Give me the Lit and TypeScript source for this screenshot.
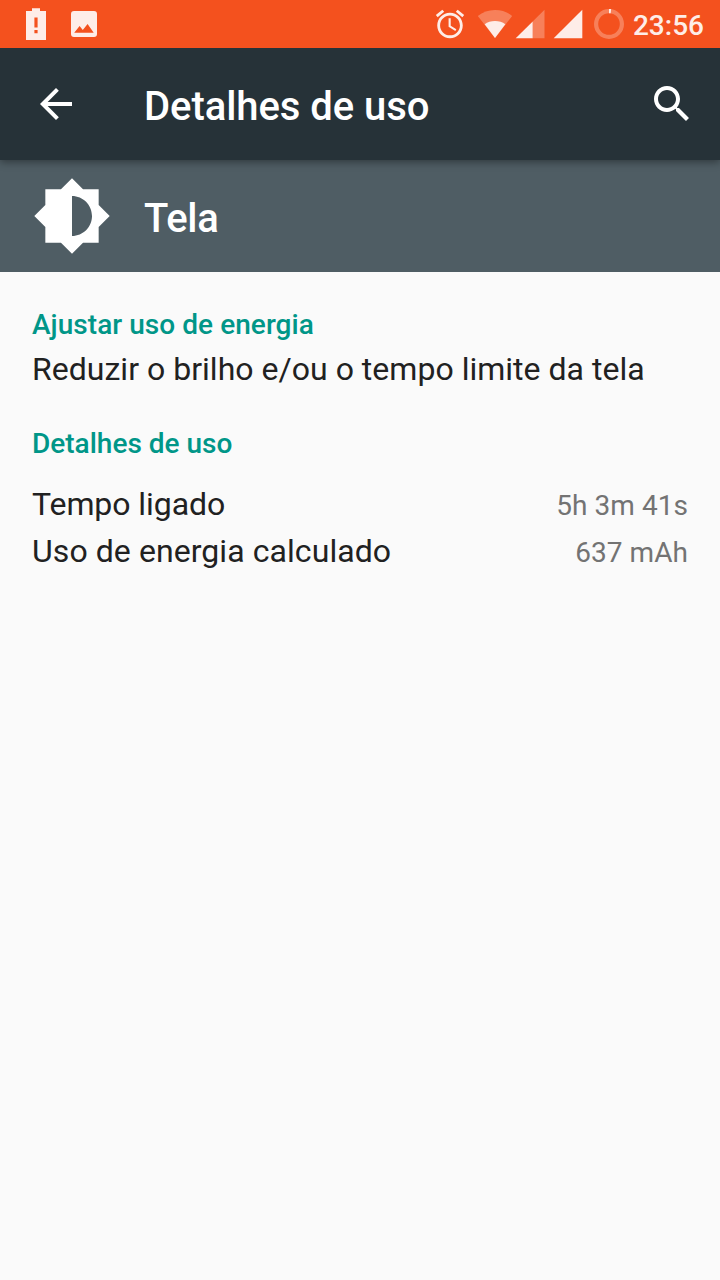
import { LitElement, html, css } from "lit";
import { customElement } from "lit/decorators.js";
import { classMap } from "lit/directives/class-map.js";

const USAGE = [
  { label: "Tempo ligado", value: "5h 3m 41s", tight: true },
  { label: "Uso de energia calculado", value: "637 mAh", tight: false },
];

@customElement("status-bar")
class StatusBar extends LitElement {
  static styles = css`
    :host {
      display: flex;
      position: relative;
      z-index: 1;
      justify-content: space-between;
      height: 48px;
      background: #f4511e;
      color: #feede8;
    }
    svg {
      display: block;
      fill: currentColor;
    }
    .right {
      display: flex;
    }
    .clock {
      font-size: 28px;
      font-weight: 500;
      line-height: 33px;
      padding: 9px 16px 0 0;
      white-space: nowrap;
    }
  `;
  render() {
    return html`
      <svg width="120" height="48" viewBox="0 0 120 48">
        <path
          fill-rule="evenodd"
          d="M26 11h6V8.300h8V11h6v29H26zM34.400 17.500v10h3.200v-10zM34.400 30v3.200h3.200V30z"
        />
        <path
          fill-rule="evenodd"
          d="M74 11h20a3 3 0 0 1 3 3v20a3 3 0 0 1-3 3H74a3 3 0 0 1-3-3V14a3 3 0 0 1 3-3zM74.200 32.700h19.500L87.600 24l-4.800 6-3.200-4z"
        />
      </svg>
      <div class="right">
        <svg width="203" height="48" viewBox="430 0 203 48">
          <g transform="translate(433 7) scale(1.417)">
            <path
              d="M22 5.720l-4.600-3.860-1.290 1.530 4.600 3.860L22 5.720zM7.880 3.390L6.600 1.860 2 5.710l1.290 1.530 4.590-3.850zM12.500 8H11v6l4.750 2.850.75-1.230-4-2.370V8zM12 4c-4.970 0-9 4.030-9 9s4.020 9 9 9c4.970 0 9-4.030 9-9s-4.030-9-9-9zm0 16c-3.870 0-7-3.130-7-7s3.130-7 7-7 7 3.130 7 7-3.130 7-7 7z"
            />
          </g>
          <path opacity=".3" d="M495 38L477.800 16Q485 10 495 10T512.200 16z" />
          <path d="M495 38L484.700 24.300Q489 21 495 21T505.300 24.300z" />
          <path opacity=".3" d="M532.700 21.500L544.500 9.700V38.200H532.700z" />
          <path d="M515.700 38.200L532.700 21.500V38.200z" />
          <path d="M553.700 38.200L582.300 9.700V38.200z" />
          <circle cx="609" cy="24" r="12.900" fill="none" stroke="currentColor" stroke-width="4.200" opacity=".3" />
          <path d="M609 9h2.100l-.4 4.200H609z" />
        </svg>
        <div class="clock">23:56</div>
      </div>
    `;
  }
}

@customElement("app-root")
class AppRoot extends LitElement {
  static styles = css`
    :host {
      display: block;
      min-height: 1280px;
      background: #fafafa;
      font-family: Roboto, sans-serif;
      color: #212121;
    }
    svg {
      display: block;
      fill: #fff;
    }
    .toolbar,
    .entry {
      display: flex;
      box-sizing: border-box;
      height: 112px;
      color: #fff;
    }
    .toolbar {
      position: relative;
      padding: 32px 24px 0 32px;
      background: #263238;
      box-shadow: 0 2px 8px rgba(0, 0, 0, 0.4);
    }
    .entry {
      padding: 16px 32px 0;
      background: #4f5d64;
    }
    h1,
    h2,
    h3,
    p {
      margin: 0;
      white-space: nowrap;
    }
    h1,
    h2 {
      font-size: 40px;
      font-weight: 500;
      line-height: 47px;
    }
    h1 {
      flex: 1;
      padding: 3px 0 0 64px;
      letter-spacing: -0.06px;
    }
    h2 {
      padding: 19px 0 0 32px;
      letter-spacing: -0.3px;
    }
    main {
      padding: 36px 32px 0;
    }
    h3 {
      font-size: 28px;
      font-weight: 500;
      line-height: 33px;
      color: #009688;
    }
    .adjust {
      letter-spacing: 0.05px;
    }
    p {
      font-size: 32px;
      line-height: 38px;
      padding: 9px 0 39px;
      letter-spacing: 0.02px;
    }
    .rows {
      display: grid;
      gap: 9px;
      padding-top: 25px;
    }
    .row {
      display: flex;
      justify-content: space-between;
      align-items: baseline;
      font-size: 32px;
      line-height: 38px;
    }
    .label {
      letter-spacing: 0.07px;
    }
    .label.tight {
      letter-spacing: -0.07px;
    }
    .value {
      font-size: 28px;
      line-height: 33px;
      color: #737373;
      letter-spacing: 0.06px;
    }
  `;
  render() {
    return html`
      <status-bar></status-bar>
      <header class="toolbar">
        <svg width="48" height="48" viewBox="0 0 24 24">
          <path d="M20 11H7.830l5.590-5.590L12 4l-8 8 8 8 1.410-1.410L7.830 13H20v-2z" />
        </svg>
        <h1>Detalhes de uso</h1>
        <svg width="48" height="48" viewBox="0 0 24 24">
          <path
            d="M15.500 14h-.79l-.28-.27C15.410 12.590 16 11.110 16 9.500 16 5.910 13.090 3 9.500 3S3 5.910 3 9.500 5.910 16 9.500 16c1.610 0 3.090-.59 4.230-1.570l.27.28v.79l5 4.990L20.490 19l-4.990-5zm-6 0C7.010 14 5 11.990 5 9.500S7.010 5 9.500 5 14 7.010 14 9.500 11.990 14 9.500 14z"
          />
        </svg>
      </header>
      <section class="entry">
        <svg width="80" height="80" viewBox="0 0 24 24">
          <path
            d="M20 15.310L23.310 12 20 8.690V4h-4.690L12 .69 8.690 4H4v4.690L.69 12 4 15.310V20h4.690L12 23.310 15.310 20H20v-4.690zM12 18V6c3.310 0 6 2.690 6 6s-2.690 6-6 6z"
          />
        </svg>
        <h2>Tela</h2>
      </section>
      <main>
        <h3 class="adjust">Ajustar uso de energia</h3>
        <p>Reduzir o brilho e/ou o tempo limite da tela</p>
        <h3>Detalhes de uso</h3>
        <div class="rows">
          ${USAGE.map(
            (u) => html`<div class="row">
              <span class=${classMap({ label: true, tight: u.tight })}>${u.label}</span>
              <span class="value">${u.value}</span>
            </div>`
          )}
        </div>
      </main>
    `;
  }
}
